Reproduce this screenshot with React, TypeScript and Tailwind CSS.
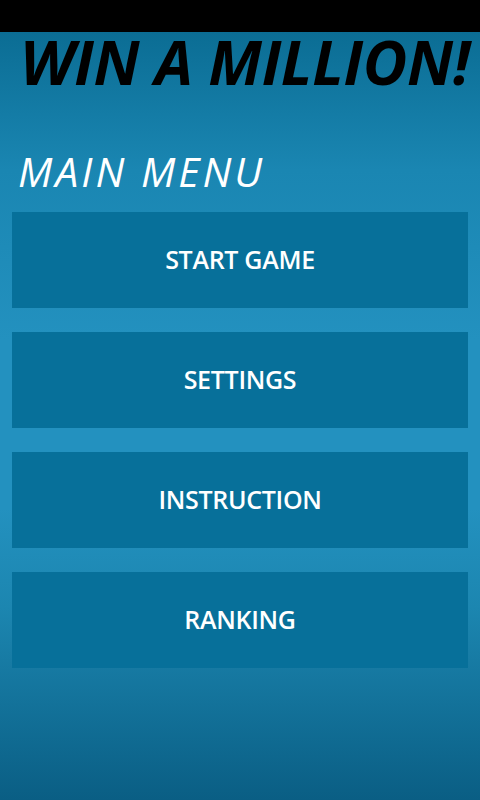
import React from 'react';

const menuItems = ['START GAME', 'SETTINGS', 'INSTRUCTION', 'RANKING'];

export default function App() {
  return (
    <div className="w-[480px] h-[800px] flex flex-col bg-black font-['Open_Sans',sans-serif]">
      {/* status bar */}
      <div className="h-8 bg-black shrink-0" />
      <div className="flex-1 flex flex-col bg-[linear-gradient(180deg,#0b6d94_0%,#1a86b2_18%,#2391bf_40%,#2391bf_62%,#1c86b0_75%,#0a5e84_100%)]">
        <h1 className="mt-[-5px] pl-[20px] text-[61px] leading-[70px] font-bold italic text-black tracking-[-0.3px] whitespace-nowrap">
          WIN A MILLION!
        </h1>
        <h2 className="mt-[49px] pl-[18px] text-[41px] leading-[50px] italic text-white tracking-[3px]">MAIN MENU</h2>
        <div className="mt-[16px] px-3 flex flex-col gap-6">
          {menuItems.map((item) => (
            <button
              key={item}
              className="h-24 bg-[#07709a] text-white text-[25px] font-semibold tracking-[-0.3px] flex items-center justify-center"
            >
              {item}
            </button>
          ))}
        </div>
      </div>
    </div>
  );
}
